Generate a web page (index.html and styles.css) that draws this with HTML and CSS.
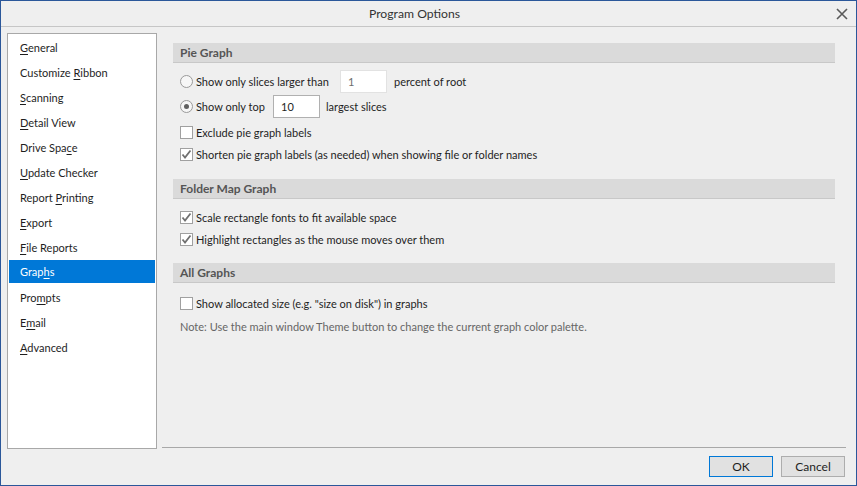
FILE: index.html
```html
<!DOCTYPE html>
<html>
<head>
<meta charset="utf-8">
<link rel="stylesheet" href="styles.css">
</head>
<body>
<div class="window">
  <div class="titlebar">
    <span class="title">Program Options</span>
    <span class="close"><svg width="12" height="12" viewBox="0 0 12 12"><path d="M1 1 L11 11 M11 1 L1 11" stroke="#5a5a5a" stroke-width="1.6"/></svg></span>
  </div>
  <div class="body">
    <ul class="nav">
      <li><u>G</u>eneral</li>
      <li>Customize <u>R</u>ibbon</li>
      <li><u>S</u>canning</li>
      <li><u>D</u>etail View</li>
      <li>Drive Spa<u>c</u>e</li>
      <li><u>U</u>pdate Checker</li>
      <li>Report <u>P</u>rinting</li>
      <li><u>E</u>xport</li>
      <li><u>F</u>ile Reports</li>
      <li class="sel">Grap<u>h</u>s</li>
      <li>Pro<u>m</u>pts</li>
      <li>E<u>m</u>ail</li>
      <li><u>A</u>dvanced</li>
    </ul>
    <div class="main">
      <div class="content">
        <div class="section-head">Pie Graph</div>
        <div class="row r1"><span class="radio"></span><span class="lbl w1">Show only slices larger than</span><span class="input dis">1</span><span class="after">percent of root</span></div>
        <div class="row r2"><span class="radio on"></span><span class="lbl w2">Show only top</span><span class="input">10</span><span class="after2">largest slices</span></div>
        <div class="row"><span class="check"></span><span class="lbl">Exclude pie graph labels</span></div>
        <div class="row"><span class="check on"><svg width="11" height="11" viewBox="0 0 11 11"><path d="M1.5 5.5 L4 8.5 L9.5 1.5" stroke="#707070" stroke-width="1.8" fill="none"/></svg></span><span class="lbl">Shorten pie graph labels (as needed) when showing file or folder names</span></div>

        <div class="section-head s2">Folder Map Graph</div>
        <div class="row first"><span class="check on"><svg width="11" height="11" viewBox="0 0 11 11"><path d="M1.5 5.5 L4 8.5 L9.5 1.5" stroke="#707070" stroke-width="1.8" fill="none"/></svg></span><span class="lbl">Scale rectangle fonts to fit available space</span></div>
        <div class="row"><span class="check on"><svg width="11" height="11" viewBox="0 0 11 11"><path d="M1.5 5.5 L4 8.5 L9.5 1.5" stroke="#707070" stroke-width="1.8" fill="none"/></svg></span><span class="lbl">Highlight rectangles as the mouse moves over them</span></div>

        <div class="section-head s3">All Graphs</div>
        <div class="row first3"><span class="check"></span><span class="lbl">Show allocated size (e.g. "size on disk") in graphs</span></div>
        <div class="row note">Note: Use the main window Theme button to change the current graph color palette.</div>
      </div>
    </div>
  </div>
  <div class="footer">
    <button class="btn ok">OK</button>
    <button class="btn">Cancel</button>
  </div>
</div>
</body>
</html>
```
FILE: styles.css
```css
* { box-sizing: border-box; }
html, body { margin: 0; padding: 0; }
body {
  width: 857px; height: 486px; overflow: hidden;
  font-family: "Lato", "Noto Sans", sans-serif;
  font-size: 11px;
  color: #1e1e1e;
}
.window {
  position: relative;
  width: 857px; height: 486px;
  border: 1px solid #2b579a;
  background: #efefef;
  display: flex; flex-direction: column;
}
.titlebar {
  height: 26px;
  border-bottom: 1px solid #c6c6c6;
  display: flex; align-items: center; justify-content: center;
  position: relative;
}
.title { font-size: 12.2px; color: #333; margin-left: -28px; }
.close { position: absolute; right: 8px; top: 7px; width: 12px; height: 12px; display: flex; }
.body { flex: 1; display: flex; padding-top: 6px; }
.nav {
  list-style: none; margin: 0 0 0 6px; padding: 1px 1px 0;
  width: 150px; height: 416px;
  background: #fff; border: 1px solid #a8a8a8;
}
.nav li {
  height: 25px; line-height: 25px; padding-left: 11px; color: #1e1e1e;
}
.nav li u { text-decoration: underline; text-underline-offset: 2px; }
.nav li.sel { background: #0078d7; color: #fff; height: 23px; line-height: 23px; margin: 0 0 2px; }
.main { flex: 1; margin-left: 5px; margin-right: 10px; height: 415px; border-bottom: 1px solid #a8a8a8; }
.content { padding: 10px 0 0 11px; width: 673px; }
.section-head {
  height: 20px; line-height: 19px;
  background: #dadada; border-bottom: 1px solid #c8c8c8;
  font-weight: bold; color: #555; padding-left: 7px; font-size: 12px;
}
.section-head.s2 { margin-top: 13px; }
.section-head.s3 { margin-top: 12px; }
.row { display: flex; align-items: center; height: 22px; padding-left: 7px; }
.row.r1 { height: 23px; margin-top: 7px; }
.row.r2 { height: 23px; margin-top: 2px; margin-bottom: 4px; }
.row.first { margin-top: 8px; }
.row.first3 { margin-top: 10px; }
.radio {
  width: 13px; height: 13px; border-radius: 50%;
  border: 1px solid #9a9a9a; background: #f6f6f6;
  display: flex; align-items: center; justify-content: center; flex: none;
}
.radio.on::after { content: ""; width: 5px; height: 5px; border-radius: 50%; background: #606060; }
.check {
  width: 13px; height: 13px; border: 1px solid #a0a0a0; background: #fff;
  display: flex; align-items: center; justify-content: center; flex: none;
}
.lbl { margin-left: 3px; white-space: nowrap; }
.w1 { width: 144px; }
.w2 { width: 77px; }
.input {
  width: 47px; height: 23px; background: #fff; border: 1px solid #b0b0b0;
  padding: 2px 0 0 7px; line-height: 17px; flex: none;
}
.input.dis { border-color: #e2e2e2; color: #6d6d6d; }
.after { margin-left: 7px; }
.after2 { margin-left: 6px; }
.note { color: #666; height: 22px; margin-top: 1px; }
.footer {
  height: 37px; display: flex; justify-content: flex-end; align-items: flex-start;
  padding: 7px 11px 0 0; gap: 8px;
}
.btn {
  width: 64px; height: 21px; font-family: inherit; font-size: 12px; color: #1e1e1e;
  background: #e1e1e1; border: 1px solid #adadad; padding: 0; margin: 0;
}
.btn.ok { border-color: #0078d7; }
```
